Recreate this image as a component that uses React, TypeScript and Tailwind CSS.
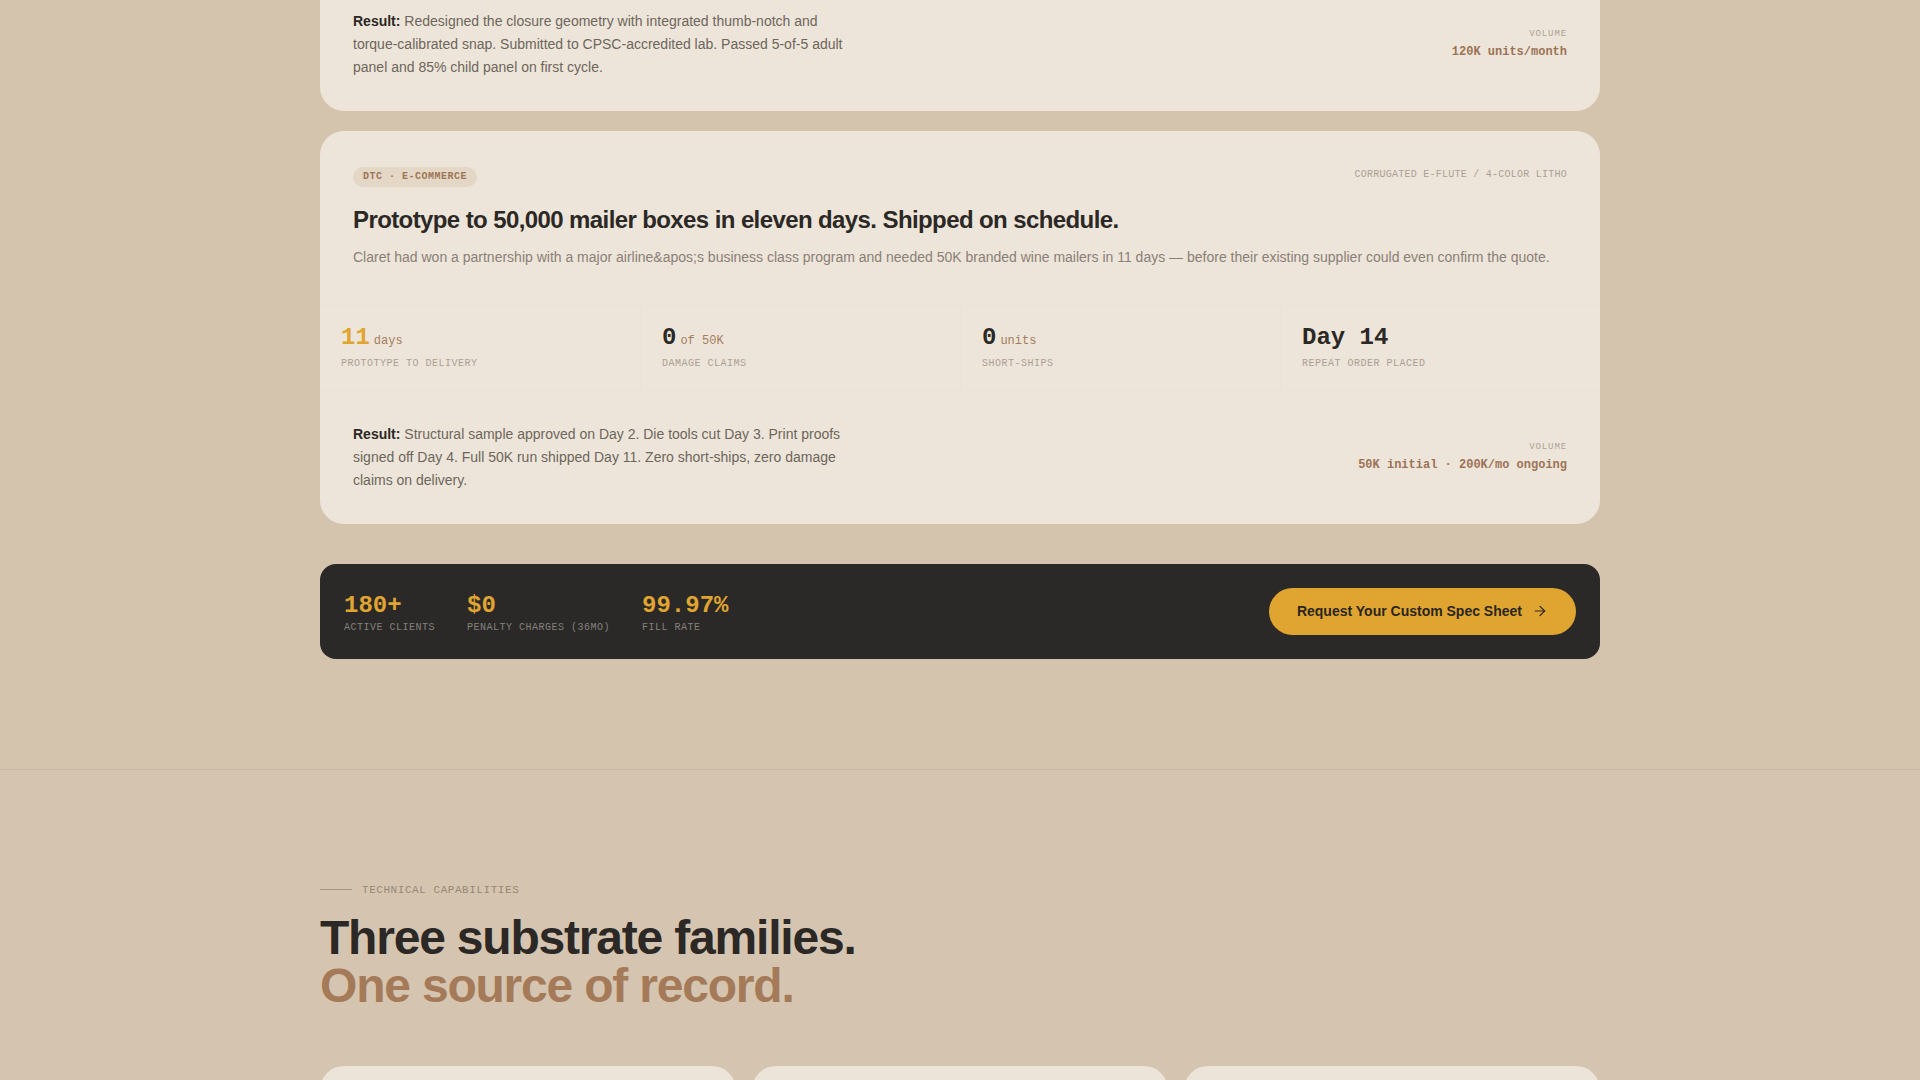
import { ArrowRight } from 'lucide-react'

const mono = { fontFamily: '"Liberation Mono", "DejaVu Sans Mono", monospace' }

const stats = [
  { value: '11', unit: 'days', label: 'Prototype to delivery', accent: true },
  { value: '0', unit: 'of 50K', label: 'Damage claims' },
  { value: '0', unit: 'units', label: 'Short-ships' },
  { value: 'Day 14', unit: '', label: 'Repeat order placed' },
]

const totals = [
  { value: '180+', label: 'Active clients' },
  { value: '$0', label: 'Penalty charges (36mo)' },
  { value: '99.97%', label: 'Fill rate' },
]

function ResultRow({ text, volume }: { text: string; volume: string }) {
  return (
    <div className="flex items-center justify-between">
      <p className="max-w-lg text-[14px] leading-[23px] text-[#6e655c]">
        <span className="font-bold text-[#2b2825]">Result:</span> {text}
      </p>
      <div className="text-right">
        <div style={mono} className="text-[9px] uppercase tracking-[0.1em] text-[#ada296]">
          Volume
        </div>
        <div style={mono} className="mt-0.5 text-[12px] font-bold text-[#9c7356]">
          {volume}
        </div>
      </div>
    </div>
  )
}

export default function App() {
  return (
    <div
      className="min-h-screen bg-[#d4c3ad] text-[#2b2825]"
      style={{ fontFamily: '"Liberation Sans", Arial, sans-serif' }}
    >
      <section className="pb-[110px]">
        <div className="mx-auto flex w-[1280px] flex-col gap-5">
          <div className="rounded-b-3xl bg-[#ede5d9] px-[33px] pb-8 pt-[10px]">
            <ResultRow
              text="Redesigned the closure geometry with integrated thumb-notch and torque-calibrated snap. Submitted to CPSC-accredited lab. Passed 5-of-5 adult panel and 85% child panel on first cycle."
              volume="120K units/month"
            />
          </div>

          <div className="overflow-hidden rounded-3xl bg-[#ede5d9]">
            <div className="px-[33px] pt-9">
              <div className="flex items-start justify-between">
                <span
                  style={mono}
                  className="rounded-full bg-[#e5d7c5] px-2.5 py-[4px] text-[10px] font-bold uppercase leading-3 tracking-wider text-[#9c7658]"
                >
                  DTC · E-commerce
                </span>
                <span style={mono} className="text-[10px] uppercase tracking-wide text-[#aca094]">
                  Corrugated E-flute / 4-color litho
                </span>
              </div>
              <h2 className="mt-4 text-[24px] font-bold leading-snug tracking-tight text-[#2b2825]">
                Prototype to 50,000 mailer boxes in eleven days. Shipped on schedule.
              </h2>
              <p className="mt-2.5 text-[14px] leading-relaxed text-[#8a8077]">
                Claret had won a partnership with a major airline&amp;apos;s business class program and needed 50K
                branded wine mailers in 11 days — before their existing supplier could even confirm the quote.
              </p>
            </div>

            <div className="mt-9 grid grid-cols-4 border-y border-[#e8e2d9]">
              {stats.map((s, i) => (
                <div key={s.label} className={`px-[21px] py-5 ${i > 0 ? 'border-l border-[#e8e2d9]' : ''}`}>
                  <div className="flex items-baseline gap-1">
                    <span
                      style={mono}
                      className={`text-[24px] font-bold leading-none ${s.accent ? 'text-[#e0a530]' : 'text-[#2b2825]'}`}
                    >
                      {s.value}
                    </span>
                    {s.unit && (
                      <span style={mono} className="text-[12px] text-[#a47d5e]">
                        {s.unit}
                      </span>
                    )}
                  </div>
                  <div style={mono} className="mt-2 text-[10px] uppercase leading-3 tracking-wider text-[#aca094]">
                    {s.label}
                  </div>
                </div>
              ))}
            </div>

            <div className="px-[33px] pb-8 pt-8">
              <ResultRow
                text="Structural sample approved on Day 2. Die tools cut Day 3. Print proofs signed off Day 4. Full 50K run shipped Day 11. Zero short-ships, zero damage claims on delivery."
                volume="50K initial · 200K/mo ongoing"
              />
            </div>
          </div>

          <div className="mt-5 flex items-center justify-between rounded-2xl bg-[#2a2928] px-6 py-6">
            <div className="flex gap-8 pt-[5px]">
              {totals.map((t) => (
                <div key={t.label}>
                  <div style={mono} className="text-[24px] font-bold leading-none text-[#e0a530]">
                    {t.value}
                  </div>
                  <div style={mono} className="mt-1 text-[10px] uppercase leading-3 tracking-wider text-[#86807a]">
                    {t.label}
                  </div>
                </div>
              ))}
            </div>
            <button className="flex h-[47px] items-center gap-2.5 rounded-full bg-[#e0a530] px-7 text-[14px] font-bold text-[#2a2520]">
              Request Your Custom Spec Sheet
              <ArrowRight className="h-4 w-4" strokeWidth={1.75} />
            </button>
          </div>
        </div>
      </section>

      <section className="border-t border-[#cab8a1] bg-[#d5c5b0] pt-28">
        <div className="mx-auto w-[1280px]">
          <div className="flex items-center gap-2.5">
            <span className="h-px w-8 bg-[#a8977f]" />
            <span style={mono} className="text-[11px] uppercase leading-4 tracking-wider text-[#968876]">
              Technical capabilities
            </span>
          </div>
          <h2 className="mt-4 text-[48px] font-bold leading-none tracking-tight">
            <span className="block text-[#2b2826]">Three substrate families.</span>
            <span className="block text-[#a47a58]">One source of record.</span>
          </h2>
          <div className="mt-14 grid grid-cols-3 gap-4">
            <div className="h-[300px] rounded-t-3xl bg-[#ece4d8]" />
            <div className="h-[300px] rounded-t-3xl bg-[#ece4d8]" />
            <div className="h-[300px] rounded-t-3xl bg-[#ece4d8]" />
          </div>
        </div>
      </section>
    </div>
  )
}
